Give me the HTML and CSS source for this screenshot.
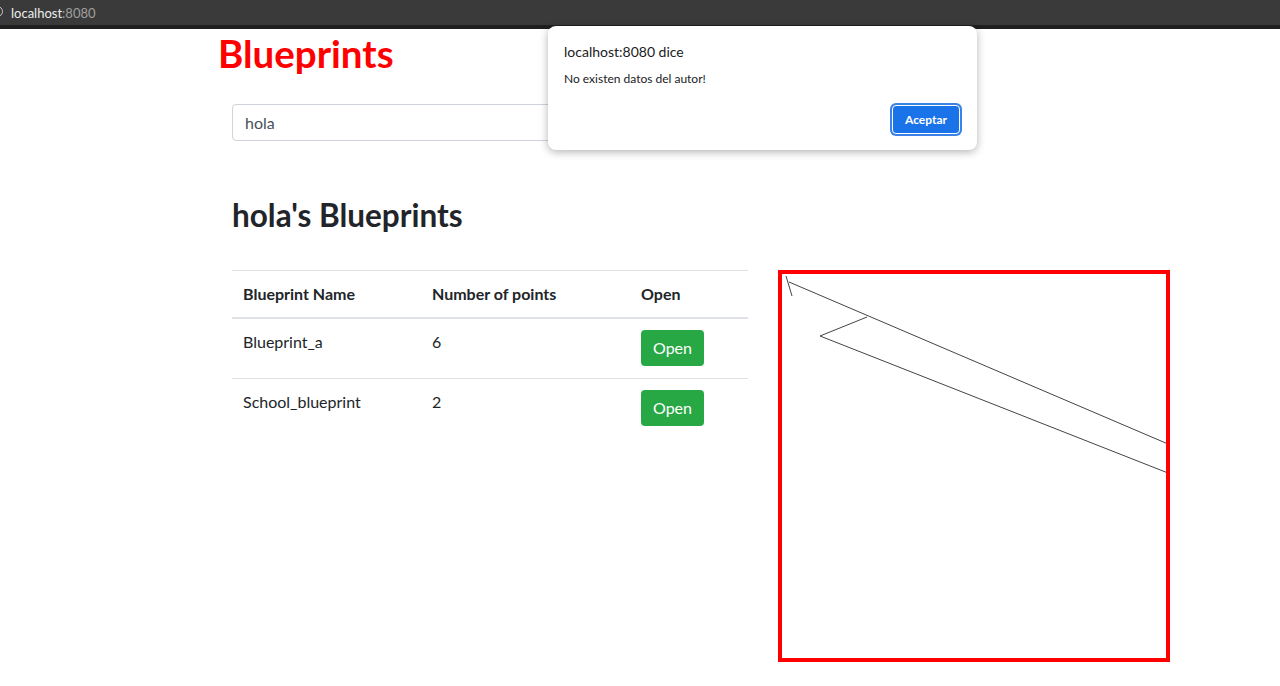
FILE: index.html
```html
<!DOCTYPE html>
<html lang="es">
<head>
<meta charset="utf-8">
<title>Blueprints</title>
<link rel="stylesheet" href="styles.css">
</head>
<body>
<div class="chrome">
  <span class="chrome-icon"></span>
  <span class="url"><span class="host">localhost</span><span class="port">:8080</span></span>
</div>
<div class="page">
  <h1 class="title">Blueprints</h1>
  <div class="content">
    <div class="search">
      <input class="search-input" type="text" value="hola">
    </div>
    <h2 class="author">hola's Blueprints</h2>
    <div class="main">
      <table class="bp-table">
        <thead>
          <tr><th class="c1">Blueprint Name</th><th class="c2">Number of points</th><th class="c3">Open</th></tr>
        </thead>
        <tbody>
          <tr><td>Blueprint_a</td><td>6</td><td><button class="btn-open">Open</button></td></tr>
          <tr><td>School_blueprint</td><td>2</td><td><button class="btn-open">Open</button></td></tr>
        </tbody>
      </table>
      <div class="canvas">
        <svg class="drawing" width="384" height="384" viewBox="0 0 384 384">
          <g stroke="#444" stroke-width="1" fill="none">
            <line x1="4" y1="2" x2="10" y2="22"/>
            <line x1="7" y1="8" x2="386" y2="170"/>
            <line x1="85" y1="43" x2="38" y2="62"/>
            <line x1="38" y1="62" x2="386" y2="199"/>
          </g>
        </svg>
      </div>
    </div>
  </div>
</div>
<div class="dialog">
  <div class="dialog-title">localhost:8080 dice</div>
  <div class="dialog-msg">No existen datos del autor!</div>
  <div class="dialog-actions"><button class="dialog-btn">Aceptar</button></div>
</div>
</body>
</html>
```
FILE: styles.css
```css
html, body {
  margin: 0;
  padding: 0;
  background: #fff;
}
body {
  font-family: Lato, "Noto Sans", sans-serif;
  color: #212529;
  font-size: 16px;
  line-height: 24px;
  overflow: hidden;
  height: 686px;
}
.chrome {
  height: 25px;
  background: #3a3a3a;
  border-bottom: 4px solid #1f1f1f;
  display: flex;
  align-items: center;
  padding-left: 11px;
  position: relative;
  overflow: hidden;
}
.chrome-icon {
  position: absolute;
  left: -8px;
  top: 6px;
  width: 9px;
  height: 9px;
  border: 1.5px solid #c8c8c8;
  border-radius: 50%;
}
.url {
  font-family: Lato, sans-serif;
  font-size: 13px;
  line-height: 16px;
}
.host { color: #ececec; }
.port { color: #a0a0a0; }

.page {
  padding-left: 218px;
}
.title {
  margin: 0;
  font-size: 38.5px;
  line-height: 48px;
  font-weight: 700;
  color: #ff0000;
}
.content {
  padding-left: 14px;
}
.search {
  margin-top: 27px;
  width: 330px;
}
.search-input {
  box-sizing: border-box;
  width: 100%;
  height: 37px;
  border: 1px solid #ced4da;
  border-radius: 4px;
  padding: 0 12px;
  font-family: Lato, sans-serif;
  font-size: 16px;
  color: #495057;
  background: #fff;
}
.author {
  margin: 55px 0 0 0;
  font-size: 31.5px;
  line-height: 38px;
  font-weight: 700;
  color: #212529;
}
.main {
  margin-top: 36px;
  display: flex;
  align-items: flex-start;
  gap: 30px;
}
.bp-table {
  width: 516px;
  border-collapse: collapse;
}
.bp-table th, .bp-table td {
  text-align: left;
  vertical-align: top;
  padding: 11px 11px 12px 11px;
  border-top: 1px solid #dee2e6;
}
.bp-table th {
  font-weight: 700;
  padding: 11px 11px;
  border-bottom: 2px solid #dee2e6;
}
.bp-table .c1 { width: 167px; }
.bp-table .c2 { width: 187px; }
.btn-open {
  height: 36px;
  padding: 0 12px;
  border: 0;
  border-radius: 4px;
  background: #28a745;
  color: #fff;
  font-family: Lato, sans-serif;
  font-size: 16px;
  line-height: 36px;
}
.canvas {
  width: 384px;
  height: 384px;
  border: 4px solid #ff0000;
  overflow: hidden;
}
.drawing { display: block; }

.dialog {
  position: absolute;
  left: 548px;
  top: 26px;
  width: 429px;
  height: 124px;
  box-sizing: border-box;
  padding: 16px 16px 0 16px;
  background: #fff;
  border-radius: 8px;
  box-shadow: 0 2px 8px rgba(0,0,0,0.3);
  font-family: Lato, sans-serif;
}
.dialog-title {
  font-size: 14px;
  line-height: 20px;
  color: #202124;
}
.dialog-msg {
  margin-top: 9px;
  font-size: 12px;
  line-height: 16px;
  color: #202124;
}
.dialog-actions {
  display: flex;
  justify-content: flex-end;
  margin-top: 18px;
  padding-right: 1px;
}
.dialog-btn {
  width: 68px;
  height: 29px;
  border: 1px solid #fff;
  border-radius: 4px;
  background: #1a73e8;
  box-shadow: 0 0 0 2px #3b82e6;
  color: #fff;
  font-family: Lato, sans-serif;
  font-size: 12px;
  font-weight: 700;
}
```
